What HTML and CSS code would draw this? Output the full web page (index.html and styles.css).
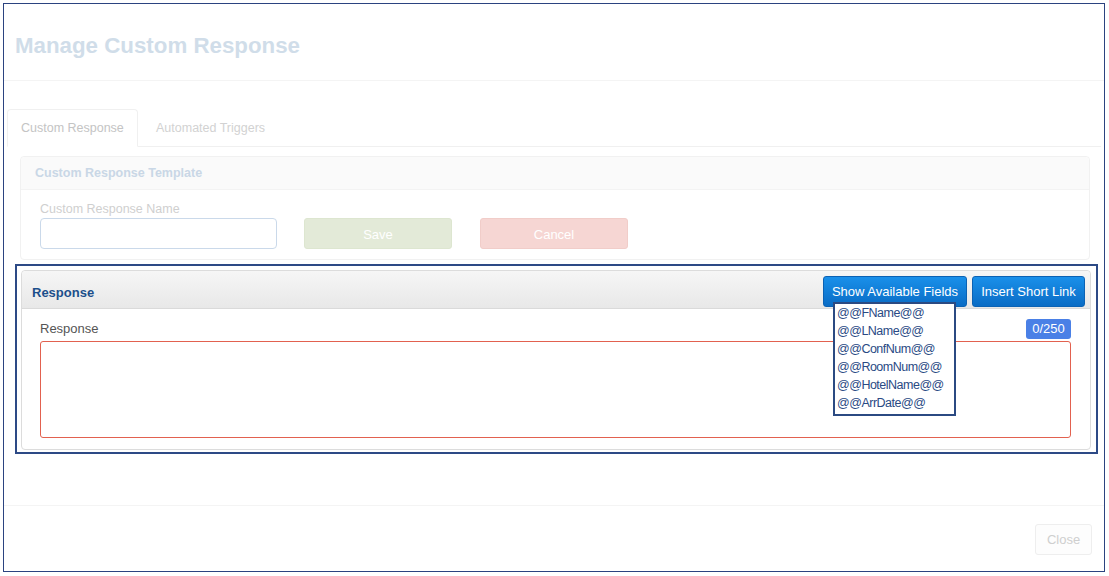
FILE: index.html
```html
<!DOCTYPE html>
<html>
<head>
<meta charset="utf-8">
<link rel="stylesheet" href="styles.css">
</head>
<body>
<div class="frame">
  <div class="modal-header">
    <h1 class="title">Manage Custom Response</h1>
  </div>
  <div class="modal-body">
    <div class="tabs">
      <div class="tab active">Custom Response</div>
      <div class="tab">Automated Triggers</div>
    </div>
    <div class="tab-content">
      <div class="panel faded">
        <div class="panel-heading faded-heading">Custom Response Template</div>
        <div class="panel-body form-row">
          <div class="field">
            <div class="faded-label">Custom Response Name</div>
            <div class="faded-input"></div>
          </div>
          <div class="btn-faded save">Save</div>
          <div class="btn-faded cancel">Cancel</div>
        </div>
      </div>
      <div class="highlight">
        <div class="panel resp">
          <div class="resp-heading">
            <div class="resp-title">Response</div>
            <div class="actions">
              <div class="btn-wrap">
                <div class="btn-blue fields-btn">Show Available Fields</div>
                <ul class="dropdown">
                  <li>@@FName@@</li>
                  <li>@@LName@@</li>
                  <li>@@ConfNum@@</li>
                  <li>@@RoomNum@@</li>
                  <li>@@HotelName@@</li>
                  <li>@@ArrDate@@</li>
                </ul>
              </div>
              <div class="btn-blue link-btn">Insert Short Link</div>
            </div>
          </div>
          <div class="resp-body">
            <div class="resp-label-row">
              <div class="resp-label">Response</div>
              <div class="badge">0/250</div>
            </div>
            <div class="textarea"></div>
          </div>
        </div>
      </div>
    </div>
  </div>
  <div class="modal-footer">
    <div class="close-btn">Close</div>
  </div>
</div>
</body>
</html>
```

FILE: styles.css
```css
* { box-sizing: border-box; }
html, body { margin: 0; padding: 0; background: #fff; }
body { font-family: "Liberation Sans", Arial, sans-serif; font-size: 13px; }

.frame {
  margin: 3px;
  width: 1102px;
  height: 569px;
  border: 1px solid #2b4380;
  display: flex;
  flex-direction: column;
}

.modal-header {
  height: 77px;
  border-bottom: 1px solid #f4f4f4;
  padding: 30px 0 0 11px;
}
.title {
  margin: 0;
  font-size: 22.3px;
  line-height: 24px;
  font-weight: bold;
  color: #d0dde9;
}

.modal-body {
  flex: 1;
  padding: 28px 3px 0 3px;
}

.tabs {
  display: flex;
  height: 38px;
  border-bottom: 1px solid #f0f0f0;
}
.tab {
  height: 38px;
  padding: 0 13px;
  line-height: 37px;
  font-size: 12.5px;
  color: #d2d2d2;
  border: 1px solid transparent;
  border-radius: 4px 4px 0 0;
  margin-right: 4px;
}
.tab.active {
  width: 131px;
  color: #c4c4c4;
  border-color: #f0f0f0;
  border-bottom-color: #fff;
  background: #fff;
}

.tab-content {
  padding: 9px 11px 0 13px;
}

.panel {
  border: 1px solid #f1f1f1;
  border-radius: 4px;
  background: #fff;
}
.faded { height: 104px; }
.faded-heading {
  height: 33px;
  background: #fafafa;
  border-bottom: 1px solid #f3f3f3;
  padding: 0 14px;
  line-height: 33px;
  font-size: 12.5px;
  font-weight: bold;
  color: #c9d7e6;
  border-radius: 4px 4px 0 0;
}
.form-row {
  display: flex;
  align-items: flex-end;
  padding: 11px 19px 0 19px;
}
.field { width: 237px; }
.faded-label {
  font-size: 12.5px;
  color: #cfcfcf;
  line-height: 16px;
  margin-bottom: 1px;
}
.faded-input {
  height: 31px;
  border: 1px solid #cad9ea;
  border-radius: 4px;
}
.btn-faded {
  width: 148px;
  height: 31px;
  line-height: 31px;
  text-align: center;
  color: #fff;
  font-size: 13px;
  border-radius: 3px;
  margin-left: 27px;
}
.save { background: #e3ead8; border: 1px solid #dde6d0; }
.cancel { background: #f6d6d3; border: 1px solid #f1cdc9; margin-left: 28px; }

.highlight {
  margin: 4px -8px 0 -5px;
  border: 2px solid #2d4a86;
  padding: 4px 5px 2px 4px;
}
.resp {
  border-color: #dcdcdc;
  height: 180px;
}
.resp-heading {
  height: 38px;
  background: linear-gradient(#f6f6f6, #e8e8e8);
  border-bottom: 1px solid #dadada;
  border-radius: 4px 4px 0 0;
  display: flex;
  align-items: center;
  justify-content: space-between;
  padding: 0 5px 0 10px;
}
.resp-title {
  font-size: 13px;
  font-weight: bold;
  color: #1c4f8b;
  padding-top: 6px;
}
.actions {
  display: flex;
  gap: 5px;
  padding-top: 4px;
}
.btn-wrap { position: relative; }
.btn-blue {
  height: 31px;
  line-height: 30px;
  background: linear-gradient(#1a90ea, #0a6cc5);
  border: 1px solid #0b62b4;
  border-radius: 3px;
  color: #fff;
  font-size: 13px;
  text-align: center;
}
.fields-btn { width: 144px; }
.link-btn { width: 113px; }

.dropdown {
  position: absolute;
  left: 10px;
  top: 26px;
  width: 123px;
  margin: 0;
  padding: 0 0 2px 2px;
  list-style: none;
  background: #fff;
  border: 2px solid #2b4a82;
  z-index: 5;
}
.dropdown li {
  line-height: 18px;
  font-size: 12.5px;
  letter-spacing: -0.5px;
  color: #2a4a84;
}

.resp-body { padding: 10px 19px 0 18px; }
.resp-label-row {
  display: flex;
  justify-content: space-between;
  align-items: flex-end;
  height: 22px;
}
.resp-label {
  font-size: 13px;
  color: #555;
  line-height: 16px;
  padding-bottom: 4px;
}
.badge {
  width: 45px;
  height: 20px;
  line-height: 20px;
  text-align: center;
  background: #4a80e6;
  color: #fff;
  font-size: 13px;
  border-radius: 3px;
  margin-bottom: 2px;
}
.textarea {
  height: 97px;
  border: 1px solid #e2614f;
  border-radius: 3px;
}

.modal-footer {
  height: 66px;
  border-top: 1px solid #f4f4f4;
  display: flex;
  justify-content: flex-end;
  padding: 18px 12px 0 0;
}
.close-btn {
  width: 57px;
  height: 31px;
  line-height: 30px;
  text-align: center;
  color: #cfcfcf;
  font-size: 13px;
  border: 1px solid #eeeeee;
  border-radius: 3px;
  background: #fdfdfd;
}
```
